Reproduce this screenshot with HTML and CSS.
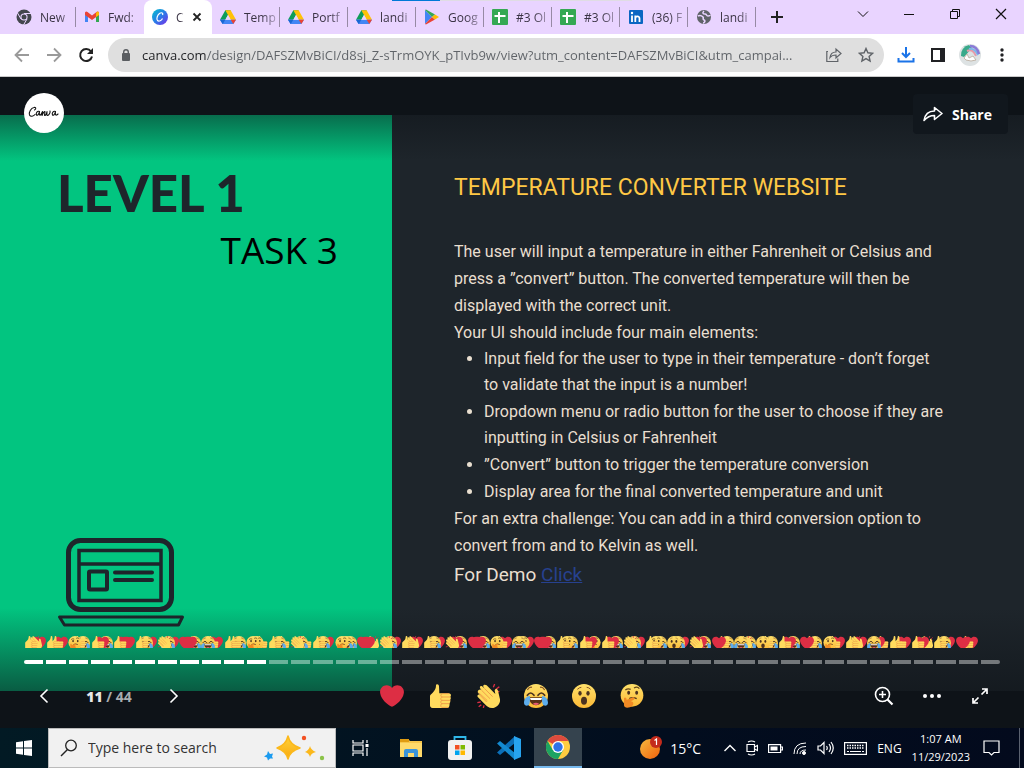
FILE: index.html
```html
<!DOCTYPE html>
<html lang="en">
<head>
<meta charset="utf-8">
<title>Level 1 Task 3</title>
<link rel="stylesheet" href="styles.css">
</head>
<body>
<svg class="sprite" aria-hidden="true">
  <defs>
    <linearGradient id="canvaGrad" x1="0" y1="0" x2="1" y2="1"><stop offset="0" stop-color="#00c4cc"/><stop offset=".5" stop-color="#2a7be8"/><stop offset="1" stop-color="#7d2ae8"/></linearGradient>
    <linearGradient id="faceGrad" x1="0" y1="0" x2="0" y2="1"><stop offset="0" stop-color="#ffe16b"/><stop offset="1" stop-color="#fbb936"/></linearGradient>
    <linearGradient id="starGrad" x1="0" y1="0" x2="0" y2="1"><stop offset="0" stop-color="#ffd23a"/><stop offset="1" stop-color="#f9a90e"/></linearGradient>
    <linearGradient id="sunGrad" x1="0" y1="0" x2="1" y2="1"><stop offset="0" stop-color="#f6b93f"/><stop offset="1" stop-color="#f0610c"/></linearGradient>
    <symbol id="drive" viewBox="0 0 24 22"><path d="M8 1h8l-8 14H4L0 15z" fill="#0f9d58"/><path d="M8 1h8l8 14h-8z" fill="#ffc107"/><path d="M4 21.500 0 15h24l-4 6.500z" fill="#4285f4"/><path d="M0 15h8l-4 6.500z" fill="#1967d2"/><path d="M16 15h8l-4 6.500z" fill="#ea4335"/><path d="M12 8l4 7H8z" fill="#e9d4ff"/></symbol>
    <symbol id="sheet" viewBox="0 0 16 16"><rect width="16" height="16" rx="1" fill="#34a853"/><path d="M7 3v11M2.500 7h11" stroke="#fff" stroke-width="2"/></symbol>
    <symbol id="heart" viewBox="0 0 36 36"><path fill="#dd2e44" d="M35.885 11.833c0-5.450-4.418-9.868-9.867-9.868-3.308 0-6.227 1.633-8.018 4.129-1.791-2.496-4.710-4.129-8.017-4.129-5.450 0-9.868 4.417-9.868 9.868 0 .772.098 1.520.266 2.241C1.751 22.587 11.216 31.568 18 34.034c6.783-2.466 16.249-11.447 17.617-19.959.170-.721.268-1.469.268-2.242z"/></symbol>
    <symbol id="thumb" viewBox="0 0 36 36"><path fill="#ffdb5e" d="M12 2c0-2.500 4.500-2.500 4.500 1.500L17 14h14c4 0 4 4 2.500 5 1 1.500 1 4-.5 5 1 1.500.5 4-1 5 1 3-.5 7-3 7H7c-3 0-4-2-4-4V18c0-2 2-3 4-5 4-4 5-7 5-11z"/><g fill="none" stroke="#ee9547" stroke-width="1.300" stroke-linecap="round"><path d="M33 19.500H21c-2.500 0-2.500-5 1-5h9M33 24.500H21c-2.500 0-2.500-5 0-5M32 29.500H21c-2.500 0-2.500-5 0-5M30 35H21c-2.500 0-2.500-5.500 0-5.500"/></g></symbol>
    <symbol id="clap" viewBox="0 0 36 36"><path d="M26 5l2-5M30 8l5-4M31 12l4-1M7 27l-5 1M8 31l-4 3M12 32l-1 4" stroke="#dd2e44" stroke-width="2"/><path fill="#ffdb5e" d="M4 9c2-2 4 0 4 0L6 6c-1-3 3-4 4-2l3 3-2-3c-1-3 3-4 5-2l13 13-1-5c0-3 4-4 5 0l3 13c1 6-5 13-12 13-5 0-8-3-11-6L3 20c-2-2 0-5 2-4l2 2-4-5c-1-2 0-3 1-4z"/><path d="M8 9l13 13M13 7l12 12M6 17l10 10M4 13l13 12" fill="none" stroke="#ee9547" stroke-width="1.300"/></symbol>
    <symbol id="laugh" viewBox="0 0 36 36"><circle cx="18" cy="18" r="18" fill="url(#faceGrad)"/><path d="M5 9q3-5 7-4M31 9q-3-5-7-4" fill="none" stroke="#87562a" stroke-width="1.800"/><path d="M5 17q5-7 10 0M21 17q5-7 10 0" fill="none" stroke="#4b3220" stroke-width="2.500" stroke-linecap="round"/><path d="M7 20h22q-2 12-11 12T7 20z" fill="#593117"/><path d="M9 21h18l-1 3H10z" fill="#fff"/><path d="M13 30q5-4 10 0-5 3-10 0z" fill="#e75a70"/><path d="M9 18C4 18 0 23 0 28s6 6 8 2c1-3 1-7 1-12zM27 18c5 0 9 5 9 10s-6 6-8 2c-1-3-1-7-1-12z" fill="#5dadec"/></symbol>
    <symbol id="wow" viewBox="0 0 36 36"><circle cx="18" cy="18" r="18" fill="url(#faceGrad)"/><path d="M8 8q3-3 6-3M28 8q-3-3-6-3" fill="none" stroke="#87562a" stroke-width="1.500"/><ellipse cx="12" cy="14" rx="2.500" ry="3.500" fill="#4b3220"/><ellipse cx="24" cy="14" rx="2.500" ry="3.500" fill="#4b3220"/><ellipse cx="18" cy="25" rx="4.500" ry="6" fill="#4b3220"/></symbol>
    <symbol id="think" viewBox="0 0 36 36"><circle cx="18" cy="17" r="17" fill="url(#faceGrad)"/><path d="M8 9q4-3 8-1M21 6q5-3 8 1" fill="none" stroke="#65471b" stroke-width="2"/><ellipse cx="13" cy="13" rx="2.200" ry="3" fill="#4b3220"/><ellipse cx="25" cy="13" rx="2.200" ry="3" fill="#4b3220"/><path d="M14 22q5-3 11 0" stroke="#4b3220" stroke-width="2" fill="none"/><path d="M6 21c2-2 4 0 4 3l9-4c3-1 4 2 1 4l-4 2c5 0 5 5 2 7-3 3-12 4-12-1z" fill="#f08a24"/></symbol>
  </defs>
</svg>

<header class="tabbar" role="tablist">
  <button class="tab" role="tab"><svg class="fav" viewBox="0 0 16 16"><circle cx="8" cy="8" r="7.500" fill="#43464d"/><path d="M8 4.500h7M5 10 1.500 4M11 10l-3.500 6" stroke="#e9d4ff" stroke-width="1"/><circle cx="8" cy="8" r="3.600" fill="#e9d4ff"/><circle cx="8" cy="8" r="2.500" fill="#43464d"/></svg><span>New</span></button>
  <button class="tab" role="tab"><svg class="fav" viewBox="0 0 16 16"><path d="M1 4v9h3V7z" fill="#4285f4"/><path d="M15 4v9h-3V7z" fill="#34a853"/><path d="M1 3.500V6l7 5 7-5V3.500Q14 2 12.500 3L8 6.500 3.500 3Q2 2 1 3.500z" fill="#ea4335"/><path d="M12 5v3l3-2V3.500Q14 2 12.500 3z" fill="#fbbc04"/></svg><span>Fwd:</span></button>
  <button class="tab active" role="tab" aria-selected="true"><svg class="fav" viewBox="0 0 16 16"><circle cx="8" cy="8" r="8" fill="url(#canvaGrad)"/><path d="M10.500 6c1-2-1-3-3-1.500S4 10 5.500 11.500s4 0 5-2" fill="none" stroke="#fff" stroke-width="1.200"/></svg><span>C</span><svg class="x" viewBox="0 0 10 10"><path d="M1.500 1.500l7 7M8.500 1.500l-7 7" stroke="#222" stroke-width="1.800"/></svg></button>
  <button class="tab" role="tab"><svg class="fav"><use href="#drive"/></svg><span>Temp</span></button>
  <button class="tab" role="tab"><svg class="fav"><use href="#drive"/></svg><span>Portf</span></button>
  <button class="tab" role="tab"><svg class="fav"><use href="#drive"/></svg><span>landi</span></button>
  <button class="tab" role="tab"><svg class="fav" viewBox="0 0 16 16"><path d="M1 1v14l7-7z" fill="#4285f4"/><path d="M1 1l7 7 3-2.500L2 .500z" fill="#34a853"/><path d="M1 15l7-7 3 2.500-9 5z" fill="#ea4335"/><path d="M11 5.500L15 8l-4 2.500L8 8z" fill="#fbbc04"/></svg><span>Goog</span></button>
  <button class="tab" role="tab"><svg class="fav"><use href="#sheet"/></svg><span>#3 Ol</span></button>
  <button class="tab" role="tab"><svg class="fav"><use href="#sheet"/></svg><span>#3 Ol</span></button>
  <button class="tab" role="tab"><svg class="fav" viewBox="0 0 16 16"><rect x="1" y="1" width="14" height="14" rx="1" fill="#0a66c2"/><path d="M4 6.500V13M7.300 13V6.500M7.300 13V9.500c0-2.500 4.200-3 4.200 0V13" fill="none" stroke="#fff" stroke-width="1.800"/><circle cx="4" cy="4" r="1.200" fill="#fff"/></svg><span>(36) F</span></button>
  <button class="tab" role="tab"><svg class="fav" viewBox="0 0 16 16"><circle cx="8" cy="8" r="7" fill="#5f6368"/><path d="M2 7c2-1 4 0 5 1s-1 2 1 3 0 3-1 3M8 2C6 4 7 5 9 5s1 2 3 2 2-1 2-1" fill="none" stroke="#e9d4ff" stroke-width="1.600"/></svg><span>landi</span></button>
  <button class="newtab" aria-label="New tab"><svg width="12" height="12"><path d="M6 0v12M0 6h12" stroke="#222" stroke-width="2"/></svg></button>
  <div class="winctl">
    <button aria-label="Search tabs"><svg width="12" height="12"><path d="M1 3.500l5 5 5-5" fill="none" stroke="#111"/></svg></button>
    <button aria-label="Minimize"><svg width="12" height="12"><path d="M1 6.500h10" stroke="#111"/></svg></button>
    <button aria-label="Restore"><svg width="12" height="12"><path d="M1.500 3.500h7v7h-7zM3.500 3.500v-2h7v7h-2" fill="none" stroke="#111"/></svg></button>
    <button aria-label="Close"><svg width="12" height="12"><path d="M1 1l10 10M11 1L1 11" stroke="#111" stroke-width="1.200"/></svg></button>
  </div>
</header>

<nav class="toolbar">
  <button aria-label="Back"><svg width="16" height="16"><path d="M15 8H2M8 1.500L1.500 8 8 14.500" fill="none" stroke="#9a9a9a" stroke-width="1.800"/></svg></button>
  <button aria-label="Forward"><svg width="16" height="16"><path d="M1 8h13M8 1.500L14.500 8 8 14.500" fill="none" stroke="#9a9a9a" stroke-width="1.800"/></svg></button>
  <button aria-label="Reload"><svg width="16" height="16"><path d="M13 4.500A6 6 0 1 0 14 9.500" fill="none" stroke="#222" stroke-width="2"/><path d="M15 1v6H9z" fill="#222"/></svg></button>
  <div class="omnibox">
    <svg width="10" height="14"><rect x="1" y="5" width="8" height="8" rx="1" fill="#5a5d61"/><path d="M2.700 5.500V4a2.300 2.300 0 0 1 4.600 0v1.500" fill="none" stroke="#5a5d61" stroke-width="1.400"/></svg>
    <input class="url" aria-label="Address" value="canva.com/design/DAFSZMvBiCI/d8sj_Z-sTrmOYK_pTIvb9w/view?utm_content=DAFSZMvBiCI&amp;utm_campai...">
    <button aria-label="Share page"><svg width="16" height="16"><path d="M2 4.500H.800v10h11v-3M4 10.500c.5-4 3-5.500 6-5.500V2l5 4.500-5 4.500V8C7 8 5.500 8.500 4 10.500z" fill="none" stroke="#5f6368" stroke-width="1.200"/></svg></button>
    <button aria-label="Bookmark"><svg width="16" height="16"><path d="M8 1.500l1.900 4.300 4.700.500-3.500 3.100 1 4.600L8 11.600 3.900 14l1-4.600L1.400 6.300l4.700-.5z" fill="none" stroke="#5f6368" stroke-width="1.400"/></svg></button>
  </div>
  <button aria-label="Downloads"><svg width="18" height="18"><path d="M9 1v9M5 7l4 4 4-4M1.500 12v3.500h15V12" fill="none" stroke="#1a73e8" stroke-width="2"/></svg></button>
  <button aria-label="Side panel"><svg width="14" height="14"><path d="M1 1h12v12H1z" fill="none" stroke="#202124" stroke-width="2"/><path d="M9 1h4v12H9z" fill="#202124"/></svg></button>
  <button aria-label="Profile"><svg width="22" height="22" viewBox="0 0 22 22"><circle cx="11" cy="11" r="11" fill="#dde2e3"/><path d="M2 12A10 10 0 0 1 10 1l3 3-8 9z" fill="#39a98a"/><path d="M8 7c4-2 7 0 9 5" fill="none" stroke="#e79aa8" stroke-width="2"/><path d="M10 5c4-1 7 2 9 6" fill="none" stroke="#7db6e8" stroke-width="2"/><path d="M11 2c5 0 8 4 9 8" fill="none" stroke="#8a7bd8" stroke-width="2.500"/><path d="M5 14l3-4 2 4 4-2 3 4-5 1-5-1z" fill="#fff" stroke="#b7a898" stroke-width=".8"/></svg></button>
  <button aria-label="Menu"><svg width="4" height="14" fill="#202124"><circle cx="2" cy="2" r="1.700"/><circle cx="2" cy="7" r="1.700"/><circle cx="2" cy="12" r="1.700"/></svg></button>
</nav>

<main class="stage">
  <article class="slide">
    <section class="cover">
      <h1>LEVEL 1</h1>
      <p class="task">TASK 3</p>
      <svg class="laptop" viewBox="0 0 128 90" fill="none" stroke="#1e252b"><rect x="11.500" y="3.500" width="103" height="69" rx="12" stroke-width="5"/><path d="M22 13.500h82v50H22zM22 27h82" stroke-width="3.500"/><rect x="32" y="34.500" width="18" height="18" rx="1" stroke-width="4"/><path d="M58 35.500h37M58 43h37" stroke-width="4" stroke-linecap="round"/><path d="M2.500 80h123l-4 8h-114z" stroke-width="3" stroke-linejoin="round"/></svg>
    </section>
    <section class="brief">
      <h2>TEMPERATURE CONVERTER WEBSITE</h2>
      <p>The user will input a temperature in either Fahrenheit or Celsius and press a ”convert” button. The converted temperature will then be displayed with the correct unit.</p>
      <p>Your UI should include four main elements:</p>
      <ul>
        <li>Input field for the user to type in their temperature - don’t forget<br>to validate that the input is a number!</li>
        <li>Dropdown menu or radio button for the user to choose if they are inputting in Celsius or Fahrenheit</li>
        <li>”Convert” button to trigger the temperature conversion</li>
        <li>Display area for the final converted temperature and unit</li>
      </ul>
      <p>For an extra challenge: You can add in a third conversion option to convert from and to Kelvin as well.</p>
      <p class="demo">For Demo <a href="#">Click</a></p>
    </section>
  </article>
  <div class="topshade"></div>
  <a class="logo" href="#" aria-label="Canva"><svg viewBox="0 0 40 40" fill="none" stroke="#111" stroke-width="1.100" stroke-linecap="round" stroke-linejoin="round"><path d="M10.500 17c2-1 1.500-3-.5-2.500-3 .5-5.500 5-4.500 7.500 1 2 4 1.500 5.500-.5M15.500 18.500c-2-1-4 1.500-3 3.500 1 1 2.500-1 3-3.500-.5 3 0 4.500 1.500 3l1.500-3-.5 4c1-3 3-5 3-3.500l-.5 3c.5 1.500 2-.5 2.500-3.500 0 2-.5 4 .5 4 1.500 0 3-3 2.500-4.500M31.500 18.500c-2-1-4 1.500-3 3.500 1 1 2.500-1 3-3.500-.5 3 0 5 2.500 2.500"/></svg></a>
  <button class="share"><svg width="20" height="16" viewBox="0 0 20 16"><path d="M1 14.500C2 8 6 5 11.500 5V1.500L19 7.500l-7.500 6v-4C7 9.500 4 11 1 14.500z" fill="none" stroke="#fff" stroke-width="1.600" stroke-linejoin="round"/></svg>Share</button>
  <div class="player">
    <div class="reactions" id="reactions"></div>
    <div class="progress" id="progress"></div>
    <div class="controls">
      <div class="pager">
        <button aria-label="Previous"><svg width="10" height="16"><path d="M8.500 1.500L2 8l6.500 6.500" fill="none" stroke="#fff" stroke-width="1.600"/></svg></button>
        <span class="count"><b>11</b> / 44</span>
        <button aria-label="Next"><svg width="10" height="16"><path d="M1.500 1.500L8 8l-6.500 6.500" fill="none" stroke="#fff" stroke-width="1.600"/></svg></button>
      </div>
      <div class="emojis">
        <button aria-label="Heart"><svg><use href="#heart"/></svg></button>
        <button aria-label="Thumbs up"><svg><use href="#thumb"/></svg></button>
        <button aria-label="Clap"><svg><use href="#clap"/></svg></button>
        <button aria-label="Laugh"><svg><use href="#laugh"/></svg></button>
        <button aria-label="Wow"><svg><use href="#wow"/></svg></button>
        <button aria-label="Think"><svg><use href="#think"/></svg></button>
      </div>
      <div class="tools">
        <button aria-label="Zoom in"><svg width="20" height="20"><g fill="none" stroke="#fff" stroke-width="1.600"><circle cx="8.500" cy="8.500" r="7"/><path d="M8.500 5v7M5 8.500h7"/></g><path d="M13.500 13.500l5 5" stroke="#fff" stroke-width="2.200"/></svg></button>
        <button aria-label="More"><svg width="18" height="6" fill="#fff"><circle cx="2" cy="3" r="2"/><circle cx="9" cy="3" r="2"/><circle cx="16" cy="3" r="2"/></svg></button>
        <button aria-label="Full screen"><svg width="16" height="16"><path d="M9.500 6.500l5-5M10 1h5v5M6.500 9.500l-5 5M1 10v5h5" fill="none" stroke="#fff" stroke-width="1.700"/></svg></button>
      </div>
    </div>
  </div>
</main>

<footer class="taskbar">
  <button class="app" aria-label="Start"><svg width="16" height="16" fill="#fff"><path d="M0 2.200l7-1V7.500H0zM8 1l8-1v7.500H8zM0 8.500h7v6.300l-7-1zM8 8.500h8V16l-8-1z"/></svg></button>
  <label class="search">
    <svg width="18" height="18"><circle cx="11" cy="6.500" r="5.300" fill="none" stroke="#222" stroke-width="1.300"/><path d="M7.500 10.500L1 17" stroke="#222" stroke-width="1.500"/></svg>
    <input type="text" placeholder="Type here to search" aria-label="Type here to search">
    <svg width="62" height="28"><path d="M24 2q2 9 12 12-10 3-12 11-2-8-11-11 9-3 11-12z" fill="url(#starGrad)" stroke="#fbb81b" stroke-width="1.500" stroke-linejoin="round"/><path d="M46 12q1 4 6 6-5 1-6 5-1-4-5-5 4-2 5-6z" fill="#fbb81b"/><path d="M4 17l2 3 3-.5-1 3 1 2-3 0-2 2-1-3-3-1 3-2z" fill="#1b9bf0"/><circle cx="40" cy="4" r="2.200" fill="#f25022"/><circle cx="58" cy="24" r="2.200" fill="#8bc34a"/></svg>
  </label>
  <button class="app" aria-label="Task view"><svg width="17" height="16" fill="none" stroke="#fff" stroke-width="1.200"><path d="M1 0v3h10V0M1 5h10v6H1zM1 16v-3h10v3M15 0v3M15 8v8"/><path d="M13.500 5.500h3" stroke-width="3"/></svg></button>
  <button class="app gap" aria-label="File Explorer"><svg width="22" height="20"><path d="M0 1h8l2 2h12v16H0z" fill="#f7c64b"/><path d="M0 1h9v3H0z" fill="#e09c12"/><path d="M0 5h22v14H0z" fill="#ffda6b"/><path d="M4 19v-6q0-2 2-2h10q2 0 2 2v6h-4v-4H8v4z" fill="#3c94d9"/></svg></button>
  <button class="app" aria-label="Store"><svg width="24" height="24"><path d="M6.500 6V1h11v5" fill="none" stroke="#2fb8ea" stroke-width="1.800"/><rect y="4" width="24" height="20" rx="3" fill="#f1f1f1"/><path d="M7 9h4.500v4.500H7z" fill="#f25022"/><path d="M12.500 9H17v4.500h-4.500z" fill="#7fba00"/><path d="M7 14.500h4.500V19H7z" fill="#00a4ef"/><path d="M12.500 14.500H17V19h-4.500z" fill="#ffb900"/></svg></button>
  <button class="app" aria-label="VS Code"><svg width="24" height="24"><path d="M18 0v7L3 19l-3-2.500z" fill="#0b6fb8"/><path d="M0 7.500L3 5l15 12v7z" fill="#1389d0"/><path d="M17 0l7 3v18l-7 3z" fill="#27a3ef"/></svg></button>
  <button class="app on" aria-label="Chrome"><svg width="24" height="24" viewBox="0 0 24 24"><circle cx="12" cy="12" r="12" fill="#ffcd40"/><path d="M12 12L1.600 6A12 12 0 0 1 22.400 6H12z" fill="#dd4b3e"/><path d="M1.600 6A12 12 0 0 0 12 24l5.200-9L12 12 6.800 15z" fill="#1da362"/><circle cx="12" cy="12" r="6" fill="#fff"/><circle cx="12" cy="12" r="4.700" fill="#2f73e8"/></svg></button>
  <div class="tray">
    <button class="weather"><svg width="24" height="24"><circle cx="11" cy="13" r="10" fill="url(#sunGrad)"/><circle cx="17" cy="6" r="6" fill="#c42b1c"/><path d="M15.500 4.500l2-1.500v6" fill="none" stroke="#fff" stroke-width="1.200"/></svg>15°C</button>
    <button aria-label="Hidden icons"><svg width="12" height="8"><path d="M.5 7L6 1.500 11.500 7" fill="none" stroke="#fff" stroke-width="1.400"/></svg></button>
    <button aria-label="Meet now"><svg width="12" height="16" fill="none" stroke="#fff" stroke-width="1.200"><path d="M1 4.500h7.500v7H1zM8.500 7l3-1.500v5l-3-1.500M2 2q3.500-2 7 0M2 14q3.500 2 7 0"/></svg></button>
    <button aria-label="Battery"><svg width="15" height="9"><path d="M.6.600h12v8H.600zM13 3h1.500v3H13" fill="none" stroke="#fff" stroke-width="1.200"/><path d="M2.500 2.500h7v4h-7z" fill="#fff"/></svg></button>
    <button aria-label="Wi-Fi"><svg width="14" height="13" fill="none" stroke="#fff"><path d="M1 12Q1 1 13 1M4 12q0-7.500 9-7.500M7 12q0-4 6-4"/><circle cx="11" cy="11" r="1.500" fill="#fff"/></svg></button>
    <button aria-label="Volume"><svg width="17" height="14" fill="none" stroke="#fff" stroke-width="1.200"><path d="M1 5h2.500L7 1.500v11L3.500 9H1zM9.500 5q1.500 2 0 4M12 3q3 4 0 8M14 1q4.500 6 0 12"/></svg></button>
    <button aria-label="Keyboard"><svg width="23" height="13"><rect x=".6" y=".6" width="21.800" height="11.800" fill="none" stroke="#fff" stroke-width="1.200"/><path d="M3 3.500h17M3 6h17" stroke="#fff" stroke-width="1.500" stroke-dasharray="1.500 1"/><path d="M3 9.500h2M6 9.500h11M18 9.500h2" stroke="#fff" stroke-width="1.200"/></svg></button>
    <button>ENG</button>
    <button class="clock"><span>1:07 AM</span><span>11/29/2023</span></button>
    <button aria-label="Notifications"><svg width="17" height="16"><path d="M1 1h15v11.500h-5L8.500 15 6 12.500H1z" fill="none" stroke="#fff" stroke-width="1.200"/></svg></button>
  </div>
</footer>
<script src="script.js"></script>
</body>
</html>
```
FILE: script.js
```js
const names = { h: "heart", t: "thumb", c: "clap", l: "laugh", w: "wow", k: "think" };
const clusters = ("tch tth ktl thl thh tlh clh hhl lth ttl kkt tlt clt tlh kll hhc clh tch tlh chl " +
  "hhl kth lkh hhl tkl thk thl clh tkl wlh chl htl lcl wtl thl htl kth tch lht tth thc tlh hth").split(" ");
document.getElementById("reactions").innerHTML = clusters.map(c =>
  "<span>" + [...c].map(k => `<svg><use href="#${names[k]}"/></svg>`).join("") + "</span>").join("");
document.getElementById("progress").innerHTML = Array.from({ length: 44 }, (_, i) =>
  `<i class="${i < 11 ? "done" : ""}"></i>`).join("");
```
FILE: styles.css
```css
* { box-sizing: border-box; }
body { margin: 0; min-height: 100vh; display: flex; flex-direction: column; font-family: "Open Sans", "Noto Sans", sans-serif; font-size: 12px; }
button { border: 0; background: none; padding: 0; margin: 0; font: inherit; color: inherit; display: flex; align-items: center; justify-content: center; }
svg { flex: none; display: block; }
h1, h2, p, ul { margin: 0; padding: 0; }
.sprite { position: absolute; width: 0; height: 0; }

.tabbar { position: relative; height: 34px; background: #e9d4ff; display: flex; padding-left: 8px; color: #3a3344; }
.tabbar::before { content: ""; position: absolute; top: 0; left: 392px; width: 240px; height: 1px; background: linear-gradient(90deg, #0078d7 48px, #e0dce4 48px); }
.tab { width: 68px; padding: 0 1px 0 8px; gap: 8px; justify-content: flex-start; position: relative; }
.tab::after { content: ""; position: absolute; right: 0; top: 7px; width: 1px; height: 20px; background: #978aa5; }
.tab:nth-child(2)::after, .tab.active::after { display: none; }
.tab .fav { width: 16px; height: 16px; }
.tab span { flex: 1; min-width: 0; white-space: nowrap; text-align: left; mask-image: linear-gradient(90deg, #000 50%, rgba(0, 0, 0, .2)); }
.tab.active { background: #fff; border-radius: 8px 8px 0 0; padding-right: 10px; }
.tab .x { width: 10px; height: 10px; }
.newtab { width: 42px; }
.winctl { margin-left: auto; display: flex; height: 28px; }
.winctl button { width: 46px; }

.toolbar { height: 43px; background: #fff; border-bottom: 1px solid #c9c9c9; display: flex; align-items: center; padding: 0 6px; }
.toolbar > button { width: 32px; height: 32px; }
.omnibox { flex: 1; height: 34px; margin: 0 6px; border-radius: 17px; background: #dfdfdf; display: flex; align-items: center; padding: 0 2px 0 13px; }
.omnibox button { width: 32px; height: 32px; }
.url { flex: 1; min-width: 0; margin-left: 11px; padding: 0; border: 0; outline: 0; font: 13px/20px "Open Sans", sans-serif; background: linear-gradient(90deg, #202124 64px, #5f6368 64px); -webkit-background-clip: text; background-clip: text; -webkit-text-fill-color: transparent; }

.stage { flex: 1; position: relative; display: flex; flex-direction: column; padding: 38px 0 37px; background: #0e1318; }
.slide { flex: 1; display: grid; grid-template-columns: 392fr 632fr; background: #1e252b; }
.cover { background: #02c580; display: flex; flex-direction: column; padding: 48px 54px 64px 57px; }
.cover h1 { font: 900 51px/60px Lato, sans-serif; color: #1e252b; }
.task { font-size: 37px; line-height: 54px; color: #000; align-self: flex-end; }
.laptop { width: 128px; height: 90px; margin-top: auto; }
.brief { padding: 58px 60px 0 62px; font: 16px/27px Roboto, sans-serif; color: #e9dfd0; }
.brief h2 { font-weight: 400; font-size: 23px; line-height: 30px; margin-bottom: 35px; color: #ffc845; }
.brief ul { padding-left: 30px; display: flex; flex-direction: column; gap: 1px; }
.brief li { line-height: 26px; }
.brief .demo { font-size: 19px; line-height: 32px; }
.brief a { color: #27418f; }

.topshade { position: absolute; inset: 0 0 auto; height: 84px; background: linear-gradient(rgba(14, 19, 24, .9), rgba(14, 19, 24, 0)); }
.logo { position: absolute; left: 24px; top: 16px; width: 40px; height: 40px; border-radius: 50%; background: #fff; }
.share { position: absolute; right: 16px; top: 17px; height: 40px; padding: 0 16px 0 10px; gap: 9px; border-radius: 4px; background: #11171d; color: #fff; font-size: 14px; font-weight: 700; }
.player { position: absolute; inset: auto 0 0; padding: 28px 0 8px; background: linear-gradient(rgba(14, 19, 24, 0), rgba(14, 19, 24, .85)); }
.reactions, .progress { display: grid; grid-template-columns: repeat(44, 1fr); margin: 0 24px; }
.reactions { height: 12px; overflow: hidden; }
.reactions span { display: flex; }
.reactions svg { width: 14px; height: 14px; margin-right: -10px; position: relative; z-index: 1; }
.reactions svg:first-child { z-index: 3; }
.reactions svg:nth-child(2) { z-index: 2; }
.progress { gap: 3px; margin-top: 12px; border-radius: 2px; overflow: hidden; }
.progress i { height: 4px; background: rgba(255, 255, 255, .4); }
.progress .done { background: #fff; }
.controls { display: grid; grid-template-columns: 1fr auto 1fr; margin-top: 8px; padding: 0 20px; color: #fff; }
.controls > div { display: flex; align-items: center; }
.controls button { width: 48px; height: 48px; }
.emojis svg { width: 24px; height: 24px; }
.tools { justify-content: flex-end; }
.count { width: 82px; text-align: center; font-size: 14px; font-weight: 700; color: #a9adb0; }
.count b { color: #e6e7e8; }

.taskbar { height: 40px; display: flex; background: linear-gradient(90deg, #021a24, #020d1e 65%, #030a1d); color: #fff; }
.app { width: 48px; margin-right: 1px; }
.app:first-child { margin-right: 0; }
.gap { margin-left: 2px; }
.on { background: #35434e; border-bottom: 2px solid #76b9ed; }
.search { width: 288px; background: #f1f1f1; border: 1px solid #bbb; display: flex; align-items: center; padding: 0 9px 0 11px; gap: 10px; }
.search input { flex: 1; min-width: 0; border: 0; padding: 0; background: none; outline: 0; font: 14px/20px "Open Sans", sans-serif; }
.search input::placeholder { color: #333; opacity: 1; }
.tray { margin-left: auto; display: flex; align-items: center; gap: 10px; padding-right: 19px; border-right: 1px solid #5b6270; margin-right: 4px; }
.weather { font-size: 14px; gap: 7px; margin-right: 13px; }
.clock { flex-direction: column; line-height: 18px; font-size: 11px; }
.tray button:last-child { margin-left: 3px; }
```
